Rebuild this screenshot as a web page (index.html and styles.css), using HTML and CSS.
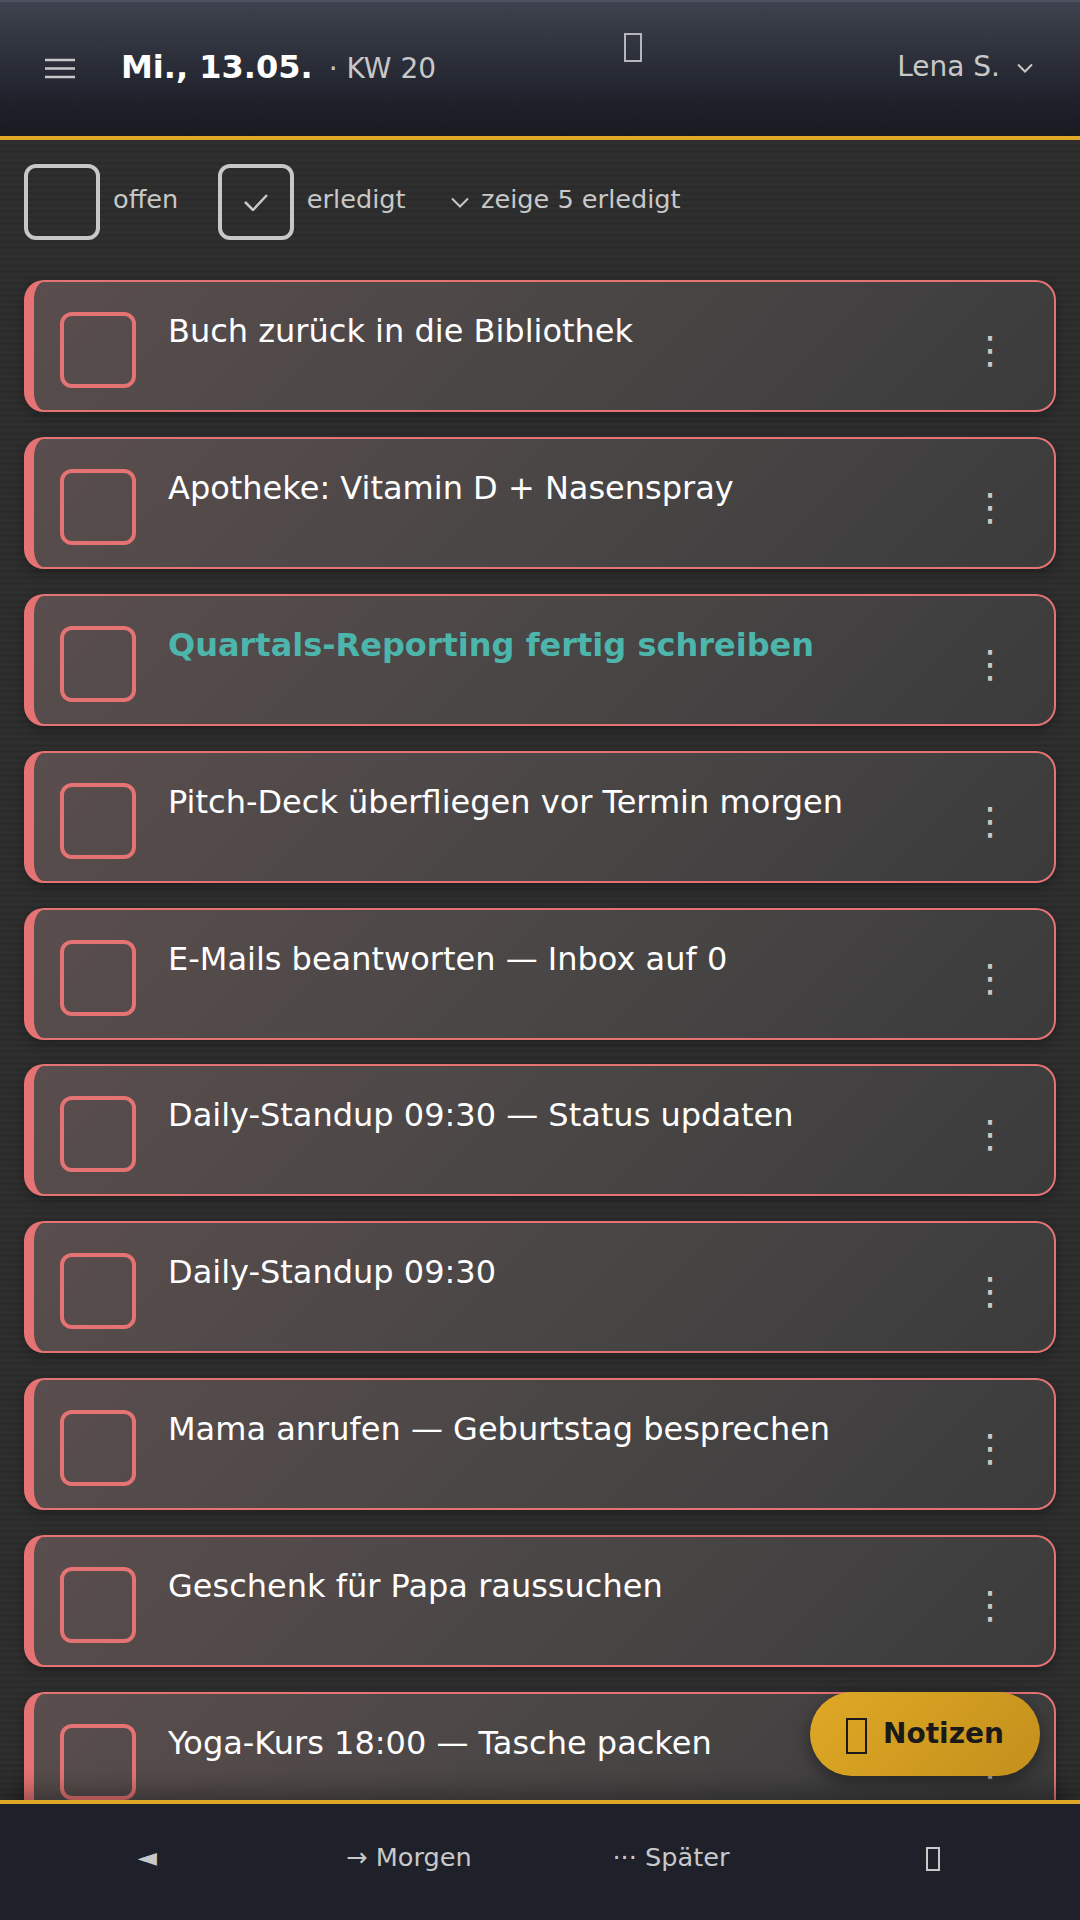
FILE: index.html
```html
<!DOCTYPE html>
<html lang="de">
<head>
  <meta charset="UTF-8" />
  <title>Aufgaben</title>
  <link rel="stylesheet" href="styles.css">
</head>
<body>
  <div class="app">
    <!-- header -->
    <header class="topbar">
      <svg class="menu-icon" width="30" height="21" viewBox="0 0 30 21"><path d="M0 2h30M0 10.5h30M0 19h30" /></svg>
      <div class="date"><strong>Mi., 13.05.</strong><span class="week">· KW 20</span></div>
      <span class="tofu tofu-top"></span>
      <div class="user">Lena S. <svg class="chev" width="16" height="10" viewBox="0 0 16 10"><path d="M1 1.5l7 7 7-7" /></svg></div>
    </header>

    <!-- filter row -->
    <div class="filters">
      <div class="box"></div>
      <span class="filter-label">offen</span>
      <div class="box"><svg width="24" height="18" viewBox="0 0 24 18"><path d="M1 9l8 8L23 2" /></svg></div>
      <span class="filter-label">erledigt</span>
      <span class="filter-label toggle"><svg class="chev" width="18" height="11" viewBox="0 0 18 11"><path d="M1 1.5l8 8 8-8" /></svg>zeige 5 erledigt</span>
    </div>

    <!-- tasks -->
    <main class="tasks">
      <div class="task"><div class="check"></div><div class="title">Buch zurück in die Bibliothek</div><div class="dots">⋮</div></div>
      <div class="task"><div class="check"></div><div class="title">Apotheke: Vitamin D + Nasenspray</div><div class="dots">⋮</div></div>
      <div class="task"><div class="check"></div><div class="title hot">Quartals-Reporting fertig schreiben</div><div class="dots">⋮</div></div>
      <div class="task"><div class="check"></div><div class="title">Pitch-Deck überfliegen vor Termin morgen</div><div class="dots">⋮</div></div>
      <div class="task"><div class="check"></div><div class="title">E-Mails beantworten — Inbox auf 0</div><div class="dots">⋮</div></div>
      <div class="task"><div class="check"></div><div class="title">Daily-Standup 09:30 — Status updaten</div><div class="dots">⋮</div></div>
      <div class="task"><div class="check"></div><div class="title">Daily-Standup 09:30</div><div class="dots">⋮</div></div>
      <div class="task"><div class="check"></div><div class="title">Mama anrufen — Geburtstag besprechen</div><div class="dots">⋮</div></div>
      <div class="task"><div class="check"></div><div class="title">Geschenk für Papa raussuchen</div><div class="dots">⋮</div></div>
      <div class="task"><div class="check"></div><div class="title">Yoga-Kurs 18:00 — Tasche packen</div><div class="dots">⋮</div></div>
    </main>

    <button class="fab"><span class="tofu tofu-fab"></span>Notizen</button>

    <!-- bottom nav -->
    <nav class="bottombar">
      <span class="nav-item">◄</span>
      <span class="nav-item">→ Morgen</span>
      <span class="nav-item">··· Später</span>
      <span class="nav-item"><span class="tofu tofu-nav"></span></span>
    </nav>
  </div>
</body>
</html>
```

FILE: styles.css
```css
:root{
  --gold:#e0a826;
  --coral:#e57373;
  --muted:#c8c8c8;
  --dark:#1e212a;
}

*,*::before,*::after{box-sizing:border-box;margin:0;padding:0}

html,body{width:1080px;height:1920px;overflow:hidden;background:#2d2d2d}
body{font-family:"DejaVu Sans",sans-serif;color:#fff}

.app{position:relative;width:1080px;height:1920px;display:flex;flex-direction:column;overflow:hidden;
     background:repeating-linear-gradient(0deg,#2f2f2f 0,#2f2f2f 3px,#2b2b2b 3px,#2b2b2b 6px)}

/* missing-glyph boxes */
.tofu{display:inline-block;border:2px solid currentColor;flex:none}
.tofu-top{position:absolute;left:624px;top:31px;width:18px;height:29px;color:#b4b6ba}
.tofu-fab{width:21px;height:36px;border-width:2.5px;margin-top:6px}
.tofu-nav{width:14px;height:24px;vertical-align:middle}

/* ---------- HEADER ---------- */
.topbar{flex:0 0 140px;display:flex;align-items:center;padding:0 47px 5px 45px;border-bottom:4px solid var(--gold);
        border-top:2px solid #4d515c;position:relative;
        background:repeating-linear-gradient(117deg,transparent 0,transparent 55px,rgba(255,255,255,.012) 55px,rgba(255,255,255,.012) 56px),
                   linear-gradient(180deg,#3e424e 0%,#1e212a 75%,#181a20 100%)}
.menu-icon{margin:3px 46px 0 0;flex:none}
.menu-icon path{stroke:var(--muted);stroke-width:2.5;fill:none}
.date{font-size:32px;display:flex;align-items:baseline}
.date strong{font-weight:700}
.week{font-size:28px;color:var(--muted);margin-left:16px}
.user{margin-left:auto;font-size:28px;color:var(--muted);display:flex;align-items:center;gap:17px}
.chev path{stroke:var(--muted);stroke-width:2;fill:none}
.user .chev{margin-top:3px}

/* ---------- FILTERS ---------- */
.filters{flex:none;display:flex;align-items:center;padding:24px 24px 0;height:100px}
.box{width:76px;height:76px;border:4px solid var(--muted);border-radius:12px;display:flex;align-items:center;justify-content:center;margin-right:13px;flex:none}
.box svg path{stroke:var(--muted);stroke-width:2.5;fill:none}
.filter-label{font-size:25.6px;color:var(--muted);margin-right:39.5px;margin-bottom:6px}
.toggle{display:flex;align-items:center;gap:12px;margin-left:6px}
.toggle .chev{margin-top:6px}

/* ---------- TASKS ---------- */
.tasks{padding:40.4px 24px 0;display:flex;flex-direction:column;gap:24.8px}
.task{flex:none;height:132px;display:flex;align-items:flex-start;padding:22px 44px 22px 26px;border:2px solid var(--coral);border-left-width:10px;border-radius:20px;
      background:linear-gradient(135deg,#5a4d4d 0%,#4a4646 50%,#3b3b3b 100%);box-shadow:0 4px 12px rgba(0,0,0,.3)}
.check{width:76px;height:76px;margin-top:8px;border:4px solid var(--coral);border-radius:12px;flex:none}
.title{flex:1;margin-left:32px;font-size:32px;line-height:1.3;margin-top:7px}
.title.hot{color:#4db6ac;font-weight:700}
.dots{font-size:38px;color:var(--muted);align-self:center;width:40px;text-align:center;margin-top:8px}

/* ---------- FAB ---------- */
.fab{position:absolute;left:810px;top:1692px;width:230px;height:84px;border:none;border-radius:42px;font-family:inherit;padding-bottom:2px;
     font-size:28px;font-weight:700;color:#1a1a1a;display:flex;align-items:center;justify-content:center;gap:16px;
     background:linear-gradient(135deg,#dfa825 0%,#c4901c 100%);box-shadow:0 6px 18px rgba(0,0,0,.4);z-index:2}

/* ---------- BOTTOM ---------- */
.bottombar{position:absolute;left:0;right:0;bottom:0;height:120px;background:var(--dark);border-top:4px solid var(--gold);
           display:grid;grid-template-columns:repeat(4,1fr);align-items:center;padding:0 16px 10px;box-shadow:0 -8px 24px rgba(0,0,0,.35);z-index:1}
.nav-item{text-align:center;font-size:25.6px;color:var(--muted)}
```
